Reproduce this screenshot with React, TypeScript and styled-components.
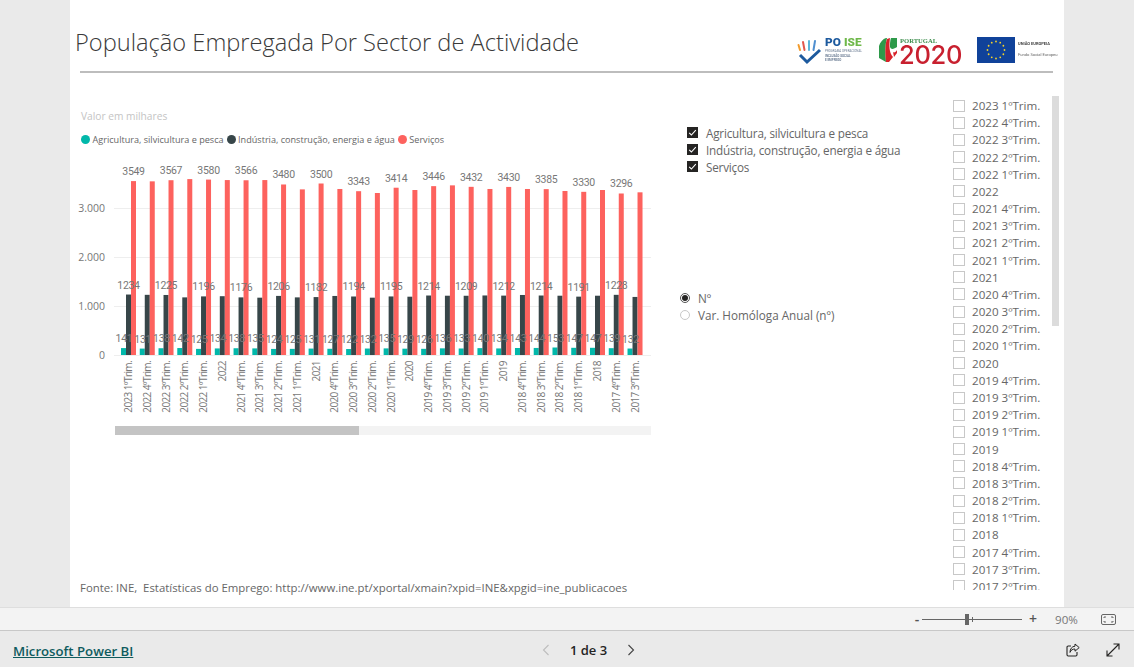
import React from "react";
import styled, { createGlobalStyle } from "styled-components";

const GlobalStyle = createGlobalStyle`
  html, body {
    margin: 0;
    padding: 0;
    background: #eaeaea;
    overflow: hidden;
    font-family: "Open Sans", "Noto Sans", sans-serif;
  }
`;

const teal = "#01b8aa";
const slate = "#374649";
const coral = "#fd625e";

const periods = [
  "2023 1ºTrim.", "2022 4ºTrim.", "2022 3ºTrim.", "2022 2ºTrim.", "2022 1ºTrim.", "2022",
  "2021 4ºTrim.", "2021 3ºTrim.", "2021 2ºTrim.", "2021 1ºTrim.", "2021",
  "2020 4ºTrim.", "2020 3ºTrim.", "2020 2ºTrim.", "2020 1ºTrim.", "2020",
  "2019 4ºTrim.", "2019 3ºTrim.", "2019 2ºTrim.", "2019 1ºTrim.", "2019",
  "2018 4ºTrim.", "2018 3ºTrim.", "2018 2ºTrim.", "2018 1ºTrim.", "2018",
  "2017 4ºTrim.", "2017 3ºTrim.", "2017 2ºTrim.",
];

const agriculture = [141, 131, 138, 142, 125, 134, 138, 135, 124, 125, 131, 127, 122, 132, 135, 129, 126, 136, 133, 140, 134, 143, 144, 153, 147, 147, 139, 132];
const industry = [1234, 1228, 1225, 1176, 1196, 1200, 1176, 1170, 1206, 1176, 1182, 1205, 1194, 1170, 1195, 1190, 1214, 1210, 1209, 1215, 1212, 1225, 1214, 1210, 1191, 1210, 1228, 1185];
const services = [3549, 3544, 3567, 3590, 3580, 3570, 3566, 3570, 3480, 3380, 3500, 3388, 3343, 3306, 3414, 3367, 3446, 3462, 3432, 3388, 3430, 3388, 3385, 3347, 3330, 3367, 3296, 3320];

const sectors = [
  { name: "Agricultura, silvicultura e pesca", color: teal },
  { name: "Indústria, construção, energia e água", color: slate },
  { name: "Serviços", color: coral },
];

const Page = styled.div`
  width: 1134px;
  height: 667px;
  display: flex;
  flex-direction: column;
  background: #eaeaea;
`;

const Stage = styled.main`
  height: 607px;
  padding-left: 70px;
`;

const Canvas = styled.div`
  width: 994px;
  height: 607px;
  background: #fff;
  display: flex;
  flex-direction: column;
  overflow: hidden;
`;

const Header = styled.header`
  height: 73px;
  margin: 0 11px 0 10px;
  box-sizing: border-box;
  border-bottom: 2px solid #bdbdbd;
  display: flex;
  justify-content: space-between;
`;

const Title = styled.h1`
  margin: 24px 0 0 -5px;
  font-size: 23.65px;
  line-height: 36px;
  font-weight: 300;
  color: #3a3a3a;
  white-space: nowrap;
`;

const Logos = styled.svg`
  width: 276px;
  height: 37px;
  margin: 33px -12px 0 0;
  filter: blur(0.3px);
`;

const Body = styled.div`
  flex: 1;
  display: flex;
  min-height: 0;
`;

const ChartColumn = styled.section`
  width: 607px;
  display: flex;
  flex-direction: column;
`;

const ChartCaption = styled.div`
  margin: 35px 0 0 11px;
  font-size: 10.2px;
  line-height: 16px;
  color: #c4c4c4;
`;

const Legend = styled.div`
  margin: 7px 0 0 11px;
  display: flex;
  height: 16px;
  align-items: center;
`;

const LegendItem = styled.div`
  display: flex;
  align-items: center;
  gap: 2.5px;
  margin-right: 3px;
  font-size: 9.1px;
  color: #666;
  white-space: nowrap;
`;

const LegendDot = styled.span<{ $color: string }>`
  width: 9px;
  height: 9px;
  border-radius: 50%;
  background: ${({ $color }) => $color};
`;

const ChartSvg = styled.svg`
  display: block;
  width: 607px;
  height: 280px;
  margin-top: 13px;
`;

const GridLine = styled.line`
  stroke: #eeeeee;
  stroke-width: 1;
`;

const AxisValue = styled.text`
  font-family: "Open Sans", sans-serif;
  font-size: 10.5px;
  fill: #777;
  text-anchor: end;
`;

const DataLabel = styled.text`
  font-family: Roboto, sans-serif;
  font-size: 10.5px;
  fill: #777;
  text-anchor: middle;
  letter-spacing: -0.3px;
`;

const PeriodLabel = styled.text`
  font-family: "Open Sans", sans-serif;
  font-size: 10px;
  letter-spacing: -0.6px;
  fill: #777;
  text-anchor: end;
`;

const ChartScroll = styled.div`
  width: 536px;
  height: 9px;
  margin: -14px 0 0 45px;
  background: #f3f3f3;
`;

const ChartThumb = styled.div`
  width: 244px;
  height: 100%;
  background: #c4c4c4;
`;

const Source = styled.p`
  margin: auto 0 11px 10px;
  font-size: 11.4px;
  line-height: 16px;
  color: #666;
  white-space: pre;
`;

const FilterColumn = styled.section`
  width: 268px;
  display: flex;
  flex-direction: column;
`;

const SectorList = styled.div`
  margin: 51px 0 0 10px;
  display: flex;
  flex-direction: column;
`;

const SectorRow = styled.div`
  height: 17px;
  display: flex;
  align-items: center;
  gap: 8px;
  font-size: 11.7px;
  letter-spacing: -0.19px;
  color: #666;
  white-space: nowrap;
`;

const CheckedBox = styled.span`
  width: 11px;
  height: 11px;
  background: #252423;
  display: flex;
  align-items: center;
  justify-content: center;
`;

const RadioList = styled.div`
  margin: 114px 0 0 3px;
  display: flex;
  flex-direction: column;
`;

const RadioRow = styled.div`
  height: 17px;
  display: flex;
  align-items: center;
  gap: 8px;
  font-size: 11.7px;
  color: #666;
`;

const RadioMark = styled.span<{ $on?: boolean }>`
  width: 10px;
  height: 10px;
  box-sizing: border-box;
  border-radius: 50%;
  border: 1px solid ${({ $on }) => ($on ? "#555" : "#c8c8c8")};
  display: flex;
  align-items: center;
  justify-content: center;

  &::after {
    content: "";
    width: 6px;
    height: 6px;
    border-radius: 50%;
    background: ${({ $on }) => ($on ? "#252423" : "transparent")};
  }
`;

const SlicerColumn = styled.section`
  flex: 1;
  display: flex;
  min-width: 0;
`;

const PeriodList = styled.div`
  width: 107px;
  height: 493px;
  box-sizing: border-box;
  margin-top: 24px;
  padding-left: 8px;
  overflow: hidden;
`;

const PeriodRow = styled.div`
  height: 17.18px;
  display: flex;
  align-items: center;
  gap: 7px;
  font-size: 11.6px;
  color: #666;
  white-space: nowrap;
`;

const EmptyBox = styled.span`
  flex: none;
  width: 12px;
  height: 12px;
  box-sizing: border-box;
  border: 1px solid #c8c8c8;
`;

const SlicerScroll = styled.div`
  width: 7px;
  height: 230px;
  margin-top: 23px;
  background: #dcdcdc;
`;

const ZoomBar = styled.div`
  height: 24px;
  box-sizing: border-box;
  background: #f3f3f3;
  border-top: 1px solid #dedede;
  border-bottom: 1px solid #c8c8c8;
  display: flex;
  align-items: center;
  padding-left: 913px;
  color: #666;
`;

const ZoomSign = styled.span`
  width: 8px;
  font-size: 14px;
  line-height: 20px;
  font-weight: 600;
  text-align: center;
  color: #555;
`;

const ZoomTrack = styled.div`
  position: relative;
  width: 100px;
  height: 1px;
  margin: 0 7px 0 1px;
  background: #666;
`;

const ZoomThumb = styled.span`
  position: absolute;
  left: 43px;
  top: -5px;
  width: 4px;
  height: 11px;
  background: #666;
`;

const ZoomTick = styled.span`
  position: absolute;
  left: 50px;
  top: -2px;
  width: 1px;
  height: 5px;
  background: #666;
`;

const ZoomValue = styled.span`
  margin-left: 18px;
  width: 46px;
  font-size: 11.6px;
  color: #777;
`;

const Footer = styled.footer`
  flex: 1;
  display: grid;
  grid-template-columns: 529px 93px 1fr;
  align-items: center;
  padding: 1px 0 0 13px;
`;

const BrandLink = styled.a`
  font-size: 13.2px;
  font-weight: 600;
  color: #0f5b5e;
  text-decoration: underline;
`;

const Pager = styled.nav`
  display: flex;
  align-items: center;
  justify-content: space-between;
  font-size: 13px;
  font-weight: 600;
  color: #252423;
`;

const FooterActions = styled.div`
  display: flex;
  justify-content: flex-end;
  gap: 26px;
  padding-right: 14px;
`;

const Check = () => (
  <svg width="9" height="9" viewBox="0 0 9 9">
    <path d="M1.2 4.8 L3.4 7 L7.8 2.2" fill="none" stroke="#fff" strokeWidth="1.1" />
  </svg>
);

const FitIcon = () => (
  <svg width="15" height="11" viewBox="0 0 15 11">
    <rect x="0.5" y="0.5" width="14" height="10" rx="1.5" fill="none" stroke="#666" />
    <path d="M3 4V3h2M10 3h2v1M12 7v1h-2M5 8H3V7" fill="none" stroke="#666" />
  </svg>
);

const Chevron = ({ flip, color }: { flip?: boolean; color: string }) => (
  <svg width="8" height="12" viewBox="0 0 8 12">
    <path d={flip ? "M1.5 1 L6.5 6 L1.5 11" : "M6.5 1 L1.5 6 L6.5 11"} fill="none" stroke={color} strokeWidth="1.1" />
  </svg>
);

const ShareIcon = () => (
  <svg width="14" height="14" viewBox="0 0 14 14">
    <path d="M5 3H2.2C1.5 3 1 3.5 1 4.2v7.6c0 .7.5 1.2 1.2 1.2h7.6c.7 0 1.2-.5 1.2-1.2V9" fill="none" stroke="#252423" strokeWidth="1.1" />
    <path d="M9 1 L13.2 4.6 L9 8.2 V6 C6.6 6 5 7 4 9.4 C4 6 5.8 3.4 9 3.2 Z" fill="none" stroke="#252423" strokeWidth="1" />
  </svg>
);

const ExpandIcon = () => (
  <svg width="14" height="14" viewBox="0 0 14 14">
    <path d="M1 13 L13 1 M7.5 1H13V6.5 M1 7.5V13H6.5" fill="none" stroke="#252423" strokeWidth="1.1" />
  </svg>
);

// chart coordinates are relative to the svg, which starts at x=70 y=160 on the page
const baseY = 195;
const scale = 0.049;
const step = 18.76;
const firstX = 51;
const barW = 5;

const topOf = (v: number) => baseY - v * scale;

const Chart = () => (
  <ChartSvg viewBox="0 0 607 280">
    {[0, 1000, 2000, 3000].map((v) => (
      <g key={v}>
        <GridLine x1={44} x2={581} y1={topOf(v) + 0.5} y2={topOf(v) + 0.5} />
        <AxisValue x={35} y={topOf(v) + 4}>{v === 0 ? "0" : v.toLocaleString("de-DE")}</AxisValue>
      </g>
    ))}
    {periods.slice(0, 28).map((period, i) => {
      const x = firstX + i * step;
      return (
        <g key={period}>
          <rect x={x} y={topOf(agriculture[i])} width={barW} height={agriculture[i] * scale} fill={teal} />
          <rect x={x + barW} y={topOf(industry[i])} width={barW} height={industry[i] * scale} fill={slate} />
          <rect x={x + barW * 2} y={topOf(services[i])} width={barW} height={services[i] * scale} fill={coral} />
          <DataLabel x={x + 3} y={topOf(agriculture[i]) - 6}>{agriculture[i]}</DataLabel>
          {i % 2 === 0 && <DataLabel x={x + barW + 2.5} y={topOf(industry[i]) - 6}>{industry[i]}</DataLabel>}
          {i % 2 === 0 && <DataLabel x={x + barW * 2 + 2.5} y={topOf(services[i]) - 6}>{services[i]}</DataLabel>}
          <PeriodLabel transform={`translate(${x + 11} 201) rotate(-90)`}>{period}</PeriodLabel>
        </g>
      );
    })}
  </ChartSvg>
);

// svg starts at x=789 y=33 on the page
const LogoStrip = () => (
  <Logos viewBox="0 0 276 37">
    {/* PO ISE: hand made of coloured fingers with a blue tick */}
    <path d="M9.5 12 L11 17" stroke="#f39c2d" strokeWidth="2" strokeLinecap="round" />
    <path d="M14 9 L15.5 17" stroke="#e2574c" strokeWidth="2" strokeLinecap="round" />
    <path d="M20 8 L20 17" stroke="#5cb5d9" strokeWidth="2" strokeLinecap="round" />
    <path d="M26 8 L24.5 17" stroke="#4f8fd0" strokeWidth="2" strokeLinecap="round" />
    <path d="M11 22 L18 29 L31 17" fill="none" stroke="#1d5a9e" strokeWidth="3" />
    <text x="36" y="13" fontFamily="Roboto, sans-serif" fontWeight="900" fontSize="11.8" fill="#1d5a9e">PO</text>
    <text x="55" y="13" fontFamily="Roboto, sans-serif" fontWeight="900" fontSize="11.8" fill="#6fb84a">ISE</text>
    <text x="36" y="19" fontFamily="Roboto, sans-serif" fontSize="3" fill="#6b7c93">PROGRAMA OPERACIONAL</text>
    <text x="36" y="23.5" fontFamily="Roboto, sans-serif" fontSize="3" fontWeight="700" fill="#6b7c93">INCLUSÃO SOCIAL</text>
    <text x="36" y="28" fontFamily="Roboto, sans-serif" fontSize="3" fontWeight="700" fill="#6b7c93">E EMPREGO</text>

    {/* Portugal 2020 */}
    <path d="M90 13 C91 9 94 6 97 5 L98 5 C96 12 96 20 97 29 L90 25 Z" fill="#2e9a4a" />
    <path d="M98 6 L101 5 C100 12 100 20 104 24 L100 29 L97 29 C96 20 96 12 98 6 Z" fill="#d8232a" />
    <path d="M102 5 L108 5 L108 14 C105 16 102 17 101 14 C101 10 101 8 102 5 Z" fill="#2e9a4a" />
    <path d="M104 19 C105 20 107 19 108 17 L108 20 L105 24 Z" fill="#d8232a" />
    <text x="111" y="10" fontFamily="'Liberation Serif', serif" fontWeight="700" fontSize="6.6" fill="#3f8f4f">PORTUGAL</text>
    <text x="110" y="31" fontFamily="Inter, sans-serif" fontWeight="500" fontSize="25.5" letterSpacing="-0.3" fill="#c8202f">2020</text>

    {/* EU flag */}
    <rect x="188" y="4" width="38" height="26" fill="#10429a" />
    {Array.from({ length: 12 }).map((_, i) => (
      <circle
        key={i}
        cx={207 + 8.5 * Math.cos((i * Math.PI) / 6)}
        cy={17 + 8.5 * Math.sin((i * Math.PI) / 6)}
        r="0.9"
        fill="#f5d328"
      />
    ))}
    <text x="229" y="12" fontFamily="Roboto, sans-serif" fontWeight="700" fontSize="4" fill="#444">UNIÃO EUROPEIA</text>
    <text x="229" y="23" fontFamily="Roboto, sans-serif" fontSize="4.1" fill="#666">Fundo Social Europeu</text>
  </Logos>
);

export default function App() {
  return (
    <Page>
      <GlobalStyle />
      <Stage>
        <Canvas>
          <Header>
            <Title>População Empregada Por Sector de Actividade</Title>
            <LogoStrip />
          </Header>
          <Body>
            <ChartColumn>
              <ChartCaption>Valor em milhares</ChartCaption>
              <Legend>
                {sectors.map((s) => (
                  <LegendItem key={s.name}>
                    <LegendDot $color={s.color} />
                    {s.name}
                  </LegendItem>
                ))}
              </Legend>
              <Chart />
              <ChartScroll>
                <ChartThumb />
              </ChartScroll>
              <Source>Fonte: INE,  Estatísticas do Emprego: http://www.ine.pt/xportal/xmain?xpid=INE&amp;xpgid=ine_publicacoes</Source>
            </ChartColumn>
            <FilterColumn>
              <SectorList>
                {sectors.map((s) => (
                  <SectorRow key={s.name}>
                    <CheckedBox>
                      <Check />
                    </CheckedBox>
                    {s.name}
                  </SectorRow>
                ))}
              </SectorList>
              <RadioList>
                <RadioRow>
                  <RadioMark $on />
                  Nº
                </RadioRow>
                <RadioRow>
                  <RadioMark />
                  Var. Homóloga Anual (nº)
                </RadioRow>
              </RadioList>
            </FilterColumn>
            <SlicerColumn>
              <PeriodList>
                {periods.map((p) => (
                  <PeriodRow key={p}>
                    <EmptyBox />
                    {p}
                  </PeriodRow>
                ))}
              </PeriodList>
              <SlicerScroll />
            </SlicerColumn>
          </Body>
        </Canvas>
      </Stage>
      <ZoomBar>
        <ZoomSign>-</ZoomSign>
        <ZoomTrack>
          <ZoomThumb />
          <ZoomTick />
        </ZoomTrack>
        <ZoomSign>+</ZoomSign>
        <ZoomValue>90%</ZoomValue>
        <FitIcon />
      </ZoomBar>
      <Footer>
        <div>
          <BrandLink href="#">Microsoft Power BI</BrandLink>
        </div>
        <Pager>
          <Chevron color="#bdbdbd" />
          1 de 3
          <Chevron flip color="#444" />
        </Pager>
        <FooterActions>
          <ShareIcon />
          <ExpandIcon />
        </FooterActions>
      </Footer>
    </Page>
  );
}
